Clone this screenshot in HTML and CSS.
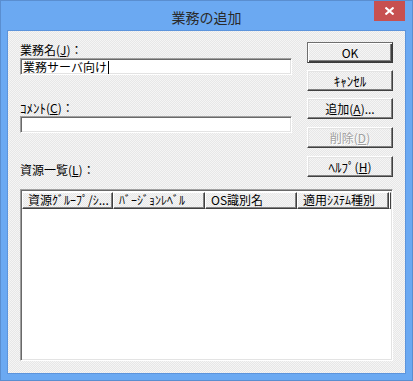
FILE: index.html
```html
<!DOCTYPE html>
<html lang="ja">
<head>
<meta charset="utf-8">
<title>業務の追加</title>
<link rel="stylesheet" href="styles.css">
</head>
<body>
<div class="window">
  <div class="titlebar">
    <div class="title-spacer"></div>
    <div class="title">業務の追加</div>
    <div class="title-actions">
      <div class="close">
        <svg width="9" height="8" viewBox="0 0 9 8"><path d="M0.5 0.5 L8.5 7.5 M8.5 0.5 L0.5 7.5" stroke="#fff" stroke-width="2" fill="none"/></svg>
      </div>
    </div>
  </div>
  <div class="client">
    <div class="top-row">
      <div class="fields">
        <div class="label label-first">業務名(<u>J</u>)：</div>
        <div class="input input-first"><span class="value">業務サーバ向け</span><span class="caret"></span></div>
        <div class="label label-comment"><span class="hw">ｺﾒﾝﾄ</span>(<u>C</u>)：</div>
        <div class="input input-comment"></div>
        <div class="label label-list">資源一覧(<u>L</u>)：</div>
      </div>
      <div class="buttons">
        <div class="btn btn-default">OK</div>
        <div class="btn"><span class="hw">ｷｬﾝｾﾙ</span></div>
        <div class="btn">追加(<u>A</u>)...</div>
        <div class="btn btn-disabled btn-gap">削除(<u>D</u>)</div>
        <div class="btn btn-gap"><span class="hw">ﾍﾙﾌﾟ</span>(<u>H</u>)</div>
      </div>
    </div>
    <div class="listview">
      <div class="list-header">
        <div class="col col-1">資源ｸﾞﾙｰﾌﾟ/ｼ...</div>
        <div class="col col-2">ﾊﾞｰｼﾞｮﾝﾚﾍﾞﾙ</div>
        <div class="col col-3">OS識別名</div>
        <div class="col col-4">適用ｼｽﾃﾑ種別</div>
        <div class="col col-rest"></div>
      </div>
      <div class="list-body"></div>
    </div>
  </div>
</div>
</body>
</html>
```

FILE: styles.css
```css
* { box-sizing: border-box; }
html, body { margin: 0; padding: 0; }
body {
  width: 413px;
  height: 381px;
  overflow: hidden;
  font-family: "Noto Sans CJK JP", "Noto Sans", sans-serif;
  font-size: 12px;
  color: #000;
}
.window {
  width: 413px;
  height: 381px;
  background: #6ba9f2;
  border: 1px solid #5a8ed0;
  padding: 0 6px 6px 6px;
  display: flex;
  flex-direction: column;
}
.titlebar {
  height: 29px;
  margin: 0 -6px;
  padding: 0 7px;
  display: grid;
  grid-template-columns: 1fr auto 1fr;
  align-items: start;
}
.title {
  align-self: center;
  font-size: 14px;
  line-height: 18px;
  color: #2a2a2a;
  padding-top: 2px;
}
.title-actions {
  display: flex;
  justify-content: flex-end;
}
.close {
  width: 31px;
  height: 20px;
  background: #c75050;
  display: flex;
  align-items: center;
  justify-content: center;
}
.client {
  flex: 1;
  border: 1px solid #5c94dc;
  background: repeating-conic-gradient(#f5f5f5 0 25%, #e7e7e7 0 50%) 0 0 / 2px 2px;
  padding: 11px 12px 12px 12px;
  display: flex;
  flex-direction: column;
}
.top-row {
  display: flex;
  gap: 15px;
}
.fields {
  width: 272px;
  display: flex;
  flex-direction: column;
}
.label {
  height: 14px;
  line-height: 14px;
  white-space: nowrap;
}
.label u, .btn u { text-underline-offset: 1px; }
.hw { font-size: 13px; }
.label-first { margin-top: 1px; }
.input {
  height: 17px;
  background: #fff;
  border: 1px solid;
  border-color: #a0a0a0 #ffffff #ffffff #a0a0a0;
  box-shadow: inset 1px 1px #696969, inset -1px -1px #e3e3e3;
  display: flex;
  align-items: flex-start;
  padding: 1px 0 0 2px;
  font-size: 12px;
  line-height: 14px;
  overflow: hidden;
}
.input-first { margin-top: 1px; }
.caret {
  width: 1px;
  height: 13px;
  background: #000;
  margin-left: 1px;
  margin-top: 1px;
}
.label-comment { margin-top: 26px; }
.input-comment { margin-top: 1px; }
.label-list { margin-top: 30px; }
.buttons {
  width: 86px;
  display: flex;
  flex-direction: column;
  gap: 7px;
}
.btn {
  height: 21px;
  border: 1px solid;
  border-color: #ffffff #404040 #404040 #ffffff;
  box-shadow: inset -1px -1px #808080, inset 1px 1px #e3e3e3;
  background: repeating-conic-gradient(#f5f5f5 0 25%, #e7e7e7 0 50%) 0 0 / 2px 2px;
  display: flex;
  align-items: center;
  justify-content: center;
  line-height: 14px;
  white-space: nowrap;
}
.btn-default {
  border-color: #6e6e6e #3a3a3a #3a3a3a #6e6e6e;
  box-shadow: inset 1px 1px #ffffff, inset -1px -1px #404040, inset -2px -2px #808080;
}
.btn-gap { margin-top: 1px; }
.btn-disabled {
  color: #a0a0a0;
  text-shadow: 1px 1px #ffffff;
}
.listview {
  margin-top: 12px;
  height: 172px;
  background: #fff;
  border: 1px solid;
  border-color: #a0a0a0 #ffffff #ffffff #a0a0a0;
  box-shadow: inset 1px 1px #696969, inset -1px -1px #e3e3e3;
  padding: 1px;
  display: flex;
  flex-direction: column;
}
.list-header {
  display: flex;
  height: 17px;
  margin-top: 1px;
}
.col {
  height: 17px;
  border: 1px solid;
  border-color: #ffffff #404040 #404040 #ffffff;
  box-shadow: inset -1px -1px #808080;
  background: repeating-conic-gradient(#f5f5f5 0 25%, #e7e7e7 0 50%) 0 0 / 2px 2px;
  padding-left: 5px;
  line-height: 14px;
  white-space: nowrap;
  overflow: hidden;
}
.col-1 { width: 91px; }
.col-2 { width: 92px; }
.col-3 { width: 92px; }
.col-4 { width: 92px; }
.col-rest { flex: 1; padding: 0; }
.list-body { flex: 1; }
```
